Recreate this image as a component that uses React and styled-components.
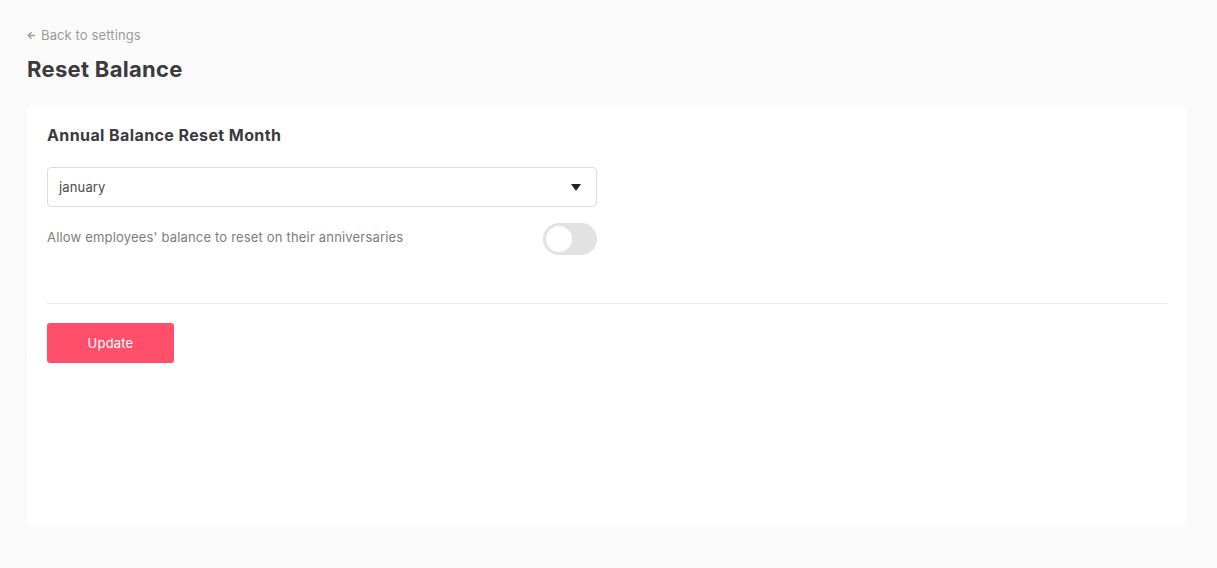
import styled, { createGlobalStyle } from 'styled-components'

const GlobalStyle = createGlobalStyle`
    body {
        margin: 0;
        background: #fafafa;
        font-family: 'Inter', 'Helvetica', sans-serif;
        color: #3a3a3f;
    }
`

const Page = styled.div`
    padding: 27px 30px 43px 27px;
    display: flex;
    flex-direction: column;
`

const BackLink = styled.a`
    display: flex;
    align-items: center;
    gap: 5px;
    color: #9b9b9b;
    font-size: 13px;
    letter-spacing: 0.12px;
    text-decoration: none;
    height: 16px;
    cursor: pointer;
`

const Title = styled.h1`
    margin: 11px 0 0;
    font-size: 22px;
    font-weight: 700;
    letter-spacing: 0.3px;
    line-height: 30px;
    color: #3a3a3f;
`

const Card = styled.div`
    margin-top: 21px;
    background: #fff;
    border-radius: 6px;
    padding: 20px;
    height: 420px;
    box-sizing: border-box;
    display: flex;
    flex-direction: column;
`

const CardHeading = styled.h2`
    margin: 0;
    font-size: 16px;
    font-weight: 700;
    letter-spacing: 0.4px;
    line-height: 20px;
    color: #3a3a3f;
`

const Select = styled.div`
    margin-top: 22px;
    width: 550px;
    height: 40px;
    box-sizing: border-box;
    border: 1px solid #dcdcdc;
    border-radius: 4px;
    display: flex;
    align-items: center;
    justify-content: space-between;
    padding: 0 15px 0 11px;
    font-size: 13px;
    letter-spacing: 0.15px;
    color: #4a4a4a;
`

const Caret = styled.span`
    width: 0;
    height: 0;
    border-left: 5px solid transparent;
    border-right: 5px solid transparent;
    border-top: 7px solid #222;
`

const ToggleRow = styled.div`
    margin-top: 16px;
    width: 550px;
    display: flex;
    align-items: flex-start;
    justify-content: space-between;
    font-size: 13px;
    letter-spacing: 0.18px;
    line-height: 28px;
    color: #7d7d7d;
`

const Switch = styled.div`
    width: 54px;
    height: 32px;
    border-radius: 16px;
    background: ${({ on }) => (on ? '#ff4f6a' : '#e2e2e2')};
    position: relative;

    &::after {
        content: '';
        position: absolute;
        top: 3px;
        left: ${({ on }) => (on ? '25px' : '3px')};
        width: 26px;
        height: 26px;
        border-radius: 50%;
        background: #fff;
    }
`

const Divider = styled.hr`
    margin: 48px 0 0;
    border: none;
    border-top: 1px solid #ececec;
`

const Button = styled.button`
    margin-top: 19px;
    width: 127px;
    height: 40px;
    border: none;
    border-radius: 3px;
    background: #ff4f6a;
    color: #fff;
    font-family: inherit;
    font-size: 13px;
    letter-spacing: 0.2px;
    cursor: pointer;
`

export default function App() {
    return (
        <>
            <GlobalStyle />
            <Page>
                <BackLink>
                    <svg width="9" height="9" viewBox="0 0 10 10" fill="none" stroke="#9b9b9b" strokeWidth="1.5">
                        <path d="M9 5H1.5M5 1.5L1.5 5L5 8.5" />
                    </svg>
                    Back to settings
                </BackLink>
                <Title>Reset Balance</Title>
                <Card>
                    <CardHeading>Annual Balance Reset Month</CardHeading>
                    <Select>
                        <span>january</span>
                        <Caret />
                    </Select>
                    <ToggleRow>
                        <span>Allow employees' balance to reset on their anniversaries</span>
                        <Switch />
                    </ToggleRow>
                    <Divider />
                    <div>
                        <Button>Update</Button>
                    </div>
                </Card>
            </Page>
        </>
    )
}
